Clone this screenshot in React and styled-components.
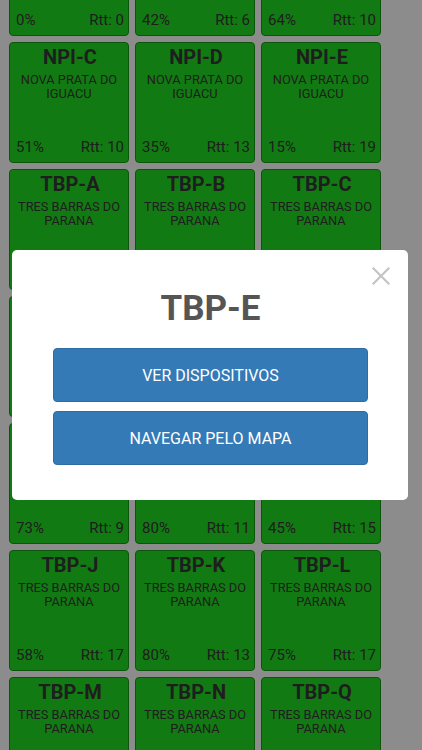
import styled, { createGlobalStyle } from "styled-components";

const GlobalStyle = createGlobalStyle`
  html, body {
    margin: 0;
    padding: 0;
    background: #e9e9e9;
    font-family: Roboto, "Noto Sans", Arial, sans-serif;
    overflow: hidden;
  }
`;

const sites = [
  { name: "TBP-X", city: "TRES BARRAS DO PARANA", pct: 0, rtt: 0 },
  { name: "TBP-Y", city: "TRES BARRAS DO PARANA", pct: 42, rtt: 6 },
  { name: "TBP-Z", city: "TRES BARRAS DO PARANA", pct: 64, rtt: 10 },
  { name: "NPI-C", city: "NOVA PRATA DO IGUACU", pct: 51, rtt: 10 },
  { name: "NPI-D", city: "NOVA PRATA DO IGUACU", pct: 35, rtt: 13 },
  { name: "NPI-E", city: "NOVA PRATA DO IGUACU", pct: 15, rtt: 19 },
  { name: "TBP-A", city: "TRES BARRAS DO PARANA", pct: 62, rtt: 12 },
  { name: "TBP-B", city: "TRES BARRAS DO PARANA", pct: 70, rtt: 11 },
  { name: "TBP-C", city: "TRES BARRAS DO PARANA", pct: 48, rtt: 14 },
  { name: "TBP-D", city: "TRES BARRAS DO PARANA", pct: 55, rtt: 10 },
  { name: "TBP-E", city: "TRES BARRAS DO PARANA", pct: 66, rtt: 12 },
  { name: "TBP-F", city: "TRES BARRAS DO PARANA", pct: 40, rtt: 16 },
  { name: "TBP-G", city: "TRES BARRAS DO PARANA", pct: 73, rtt: 9 },
  { name: "TBP-H", city: "TRES BARRAS DO PARANA", pct: 80, rtt: 11 },
  { name: "TBP-I", city: "TRES BARRAS DO PARANA", pct: 45, rtt: 15 },
  { name: "TBP-J", city: "TRES BARRAS DO PARANA", pct: 58, rtt: 17 },
  { name: "TBP-K", city: "TRES BARRAS DO PARANA", pct: 80, rtt: 13 },
  { name: "TBP-L", city: "TRES BARRAS DO PARANA", pct: 75, rtt: 17 },
  { name: "TBP-M", city: "TRES BARRAS DO PARANA", pct: 62, rtt: 14 },
  { name: "TBP-N", city: "TRES BARRAS DO PARANA", pct: 71, rtt: 12 },
  { name: "TBP-Q", city: "TRES BARRAS DO PARANA", pct: 50, rtt: 16 },
];

export default function App() {
  return (
    <>
      <GlobalStyle />
      <Grid>
        {sites.map((s) => (
          <Tile key={s.name}>
            <TileName>{s.name}</TileName>
            <TileCity>{s.city}</TileCity>
            <TileStats>
              <span>{s.pct}%</span>
              <span>Rtt: {s.rtt}</span>
            </TileStats>
          </Tile>
        ))}
      </Grid>
      <Backdrop>
        <Modal>
          <CloseButton aria-label="Fechar">
            <svg width="18" height="18" viewBox="0 0 18 18">
              <path d="M1.5 1.5 L16.5 16.5 M16.5 1.5 L1.5 16.5" stroke="#c4c4c4" strokeWidth="2.2" strokeLinecap="square" />
            </svg>
          </CloseButton>
          <ModalTitle>TBP-E</ModalTitle>
          <ActionButton>VER DISPOSITIVOS</ActionButton>
          <ActionButton>NAVEGAR PELO MAPA</ActionButton>
        </Modal>
      </Backdrop>
    </>
  );
}

const Grid = styled.div`
  display: flex;
  flex-wrap: wrap;
  gap: 6px;
  width: 378px;
  padding-left: 9px;
  margin-top: -85px;
`;

const Tile = styled.div`
  box-sizing: border-box;
  width: 120px;
  height: 121px;
  background: #1fcc1f;
  border: 1px solid #149014;
  border-radius: 4px;
  display: flex;
  flex-direction: column;
  padding: 2px 4px 6px 6px;
  color: #333;
`;

const TileName = styled.div`
  font-size: 20px;
  font-weight: 700;
  line-height: 24px;
  text-align: center;
`;

const TileCity = styled.div`
  margin: 4px -4px 0 -6px;
  font-size: 12.8px;
  line-height: 13.5px;
  text-align: center;
`;

const TileStats = styled.div`
  margin-top: auto;
  display: flex;
  justify-content: space-between;
  font-size: 15px;
  line-height: 18px;
`;

const Backdrop = styled.div`
  position: fixed;
  inset: 0;
  background: rgba(0, 0, 0, 0.4);
  display: flex;
  align-items: center;
  justify-content: center;
`;

const Modal = styled.div`
  position: relative;
  box-sizing: border-box;
  width: 396px;
  margin-left: -2px;
  background: #fff;
  border-radius: 5px;
  padding: 37px 40px 35px 41px;
  display: flex;
  flex-direction: column;
  gap: 9px;
`;

const CloseButton = styled.button`
  position: absolute;
  top: 17px;
  right: 18px;
  width: 18px;
  height: 18px;
  padding: 0;
  border: none;
  background: none;
  display: flex;
`;

const ModalTitle = styled.div`
  font-size: 35px;
  font-weight: 700;
  line-height: 44px;
  text-align: center;
  color: #555;
  margin-bottom: 8px;
`;

const ActionButton = styled.button`
  height: 54px;
  width: 100%;
  background: #337ab7;
  border: 1px solid #2e6da4;
  border-radius: 4px;
  color: #fff;
  font-family: Roboto, "Noto Sans", Arial, sans-serif;
  font-size: 16px;
`;
